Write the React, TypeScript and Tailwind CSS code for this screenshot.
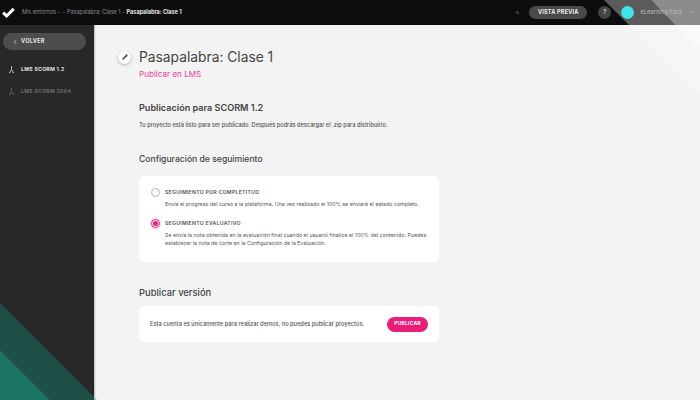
import { ChevronDown, ChevronLeft, Pencil } from "lucide-react"

const font = { fontFamily: '"Inter", "Liberation Sans", sans-serif' }

function LmsIcon({ className }: { className: string }) {
    return (
        <svg viewBox="0 0 10 10" className={className} fill="none" stroke="currentColor" strokeWidth="1.1">
            <circle cx="5" cy="1.6" r="1.1" fill="currentColor" stroke="none" />
            <path d="M5 3v2.5M5 5.5L2 9.5M5 5.5L8 9.5M1.5 9.5h2M6.5 9.5h2" />
        </svg>
    )
}

function Radio({ checked }: { checked?: boolean }) {
    return (
        <span
            className={`flex h-[9px] w-[9px] shrink-0 items-center justify-center rounded-full border bg-white ${
                checked ? "border-[#ec1e79] shadow-[0_0_1px_1px_rgba(236,30,121,0.2)]" : "border-[#b5b5b5]"
            }`}
        >
            {checked && <span className="h-[5px] w-[5px] rounded-full bg-[#ec1e79]" />}
        </span>
    )
}

export default function App() {
    return (
        <div style={font} className="relative flex h-[400px] w-[700px] flex-col overflow-hidden bg-[#f3f3f3]">
            <header className="flex h-[25px] shrink-0 items-center bg-[#0d0d0d] pr-[5px] pl-[2px]">
                <svg viewBox="0 0 14 11" className="h-[11px] w-[13px]">
                    <path d="M1.2 5.6L5 9.2L12.6 1.6" fill="none" stroke="#fff" strokeWidth="3.2" />
                </svg>
                <div className="ml-[7px] flex items-center gap-[2px] text-[5.5px] whitespace-nowrap text-[#8a8a8a]">
                    <span>Mis entornos -</span>
                    <span className="ml-[1px]">- Pasapalabra: Clase 1 -</span>
                    <span className="font-bold text-[#e8e8e8]">Pasapalabra: Clase 1</span>
                </div>
                <div className="relative z-10 ml-auto flex items-center">
                    <span className="h-[3px] w-[3px] rounded-full border border-[#666]" />
                    <button className="ml-[10px] flex h-[13px] w-[58px] items-center justify-center rounded-full bg-[#4a4a4a] text-[5.5px] font-bold tracking-[0.2px] text-[#eee]">
                        VISTA PREVIA
                    </button>
                    <span className="ml-[11px] flex h-[13px] w-[13px] items-center justify-center rounded-full bg-[#444] text-[6.5px] font-bold text-[#bbb]">
                        ?
                    </span>
                    <span className="ml-[10px] h-[13px] w-[13px] rounded-full bg-[#3fe3ea]" />
                    <span className="ml-[6px] text-[5.8px] text-[#bdbdbd]">eLearning Fácil</span>
                    <ChevronDown className="ml-[6px] h-[7px] w-[7px] text-[#c8c8c8]" />
                </div>
            </header>

            <div className="flex min-h-0 flex-1">
                <aside className="relative flex w-[94px] shrink-0 flex-col bg-[#282828] px-[3px] pt-[8px] font-bold shadow-[1px_0_1px_rgba(0,0,0,0.2)]">
                    <button className="flex h-[17px] w-[83px] items-center rounded-full bg-[#4d4d4d] pl-[9px] text-[5.5px] tracking-[0.3px] text-[#e4e4e4]">
                        <ChevronLeft className="h-[6px] w-[6px]" strokeWidth={3} />
                        <span className="ml-[3px]">VOLVER</span>
                    </button>
                    <div className="mt-[16px] flex items-center gap-[4px] pl-[5px] text-[5.2px] tracking-[0.25px] text-[#e0e0e0]">
                        <LmsIcon className="h-[7px] w-[7px]" />
                        <span className="ml-[2px]">LMS SCORM 1.2</span>
                    </div>
                    <div className="mt-[14px] flex items-center gap-[4px] pl-[5px] text-[5.2px] tracking-[0.25px] text-[#6d6d6d]">
                        <LmsIcon className="h-[7px] w-[7px]" />
                        <span className="ml-[2px]">LMS SCORM 2004</span>
                    </div>
                </aside>

                <main className="flex-1 pt-[22px] pl-[45px] text-[#444]">
                    <div className="-ml-[21px] flex items-center gap-[8px]">
                        <span className="flex h-[13px] w-[13px] items-center justify-center rounded-full bg-white shadow-[0_1px_3px_rgba(0,0,0,0.3)]">
                            <Pencil className="h-[6px] w-[6px] fill-[#555] text-[#555]" />
                        </span>
                        <h1 className="text-[13.8px] leading-[20px] text-[#444]">Pasapalabra: Clase 1</h1>
                    </div>
                    <p className="mt-[2px] text-[8.1px] leading-[11px] text-[#ec3d99]">Publicar en LMS</p>

                    <h2 className="mt-[22px] text-[9.1px] leading-[12px] font-semibold">Publicación para SCORM 1.2</h2>
                    <p className="mt-[7px] text-[5.65px] leading-[8px] font-medium text-[#555]">
                        Tu proyecto está listo para ser publicado. Después podrás descargar el .zip para distribuirlo.
                    </p>

                    <h2 className="mt-[24px] text-[8.6px] leading-[12px] font-medium">Configuración de seguimiento</h2>
                    <section className="mt-[11px] flex h-[86px] w-[300px] flex-col rounded-md bg-white pt-[12px] pl-[12px]">
                        <div className="flex items-center gap-[5px]">
                            <Radio />
                            <span className="text-[5.2px] font-semibold tracking-[0.25px] text-[#555]">SEGUIMIENTO POR COMPLETITUD</span>
                        </div>
                        <p className="mt-[3px] ml-[14px] text-[5.3px] leading-[8px] text-[#555]">
                            Envía el progreso del curso a la plataforma. Una vez realizado el 100% se enviará el estado completo.
                        </p>
                        <div className="mt-[11px] flex items-center gap-[5px]">
                            <Radio checked />
                            <span className="text-[5.2px] font-semibold tracking-[0.25px] text-[#555]">SEGUIMIENTO EVALUATIVO</span>
                        </div>
                        <p className="mt-[3px] ml-[14px] w-[270px] text-[5.3px] leading-[8px] text-[#555]">
                            Se envía la nota obtenida en la evaluación final cuando el usuario finalice el 100% del contenido. Puedes establecer la nota de corte en la Configuración de la Evaluación.
                        </p>
                    </section>

                    <h2 className="mt-[25px] text-[9.4px] leading-[12px] font-medium">Publicar versión</h2>
                    <section className="mt-[7px] flex h-[36px] w-[300px] items-center justify-between rounded-md bg-white pr-[11px] pl-[11px]">
                        <p className="text-[5.7px] font-medium text-[#555]">
                            Esta cuenta es únicamente para realizar demos, no puedes publicar proyectos.
                        </p>
                        <button className="flex h-[15px] w-[41px] items-center justify-center rounded-full bg-[#ea1d78] text-[5px] font-bold tracking-[0.2px] text-white">
                            PUBLICAR
                        </button>
                    </section>
                </main>
            </div>

            {/* diagonales decorativas */}
            <svg viewBox="0 0 700 400" className="pointer-events-none absolute top-0 left-0 h-[400px] w-[700px]">
                <polygon points="604,0 629,25 675,25 651,0" fill="#5b5b5b" />
                <polygon points="651,0 675,25 700,25 700,0" fill="#8b8b8b" />
                <polygon points="629,25 700,96 700,49 675,25" fill="#ffffff" fillOpacity="0.25" />
                <polygon points="675,25 700,49 700,25" fill="#ffffff" fillOpacity="0.6" />
                <polygon points="0,303 94,397 94,400 50,400 0,350" fill="#1f5047" />
                <polygon points="0,350 50,400 0,400" fill="#1c7365" />
                <polygon points="94,397 97,400 94,400" fill="#7fd0c2" />
            </svg>
        </div>
    )
}
